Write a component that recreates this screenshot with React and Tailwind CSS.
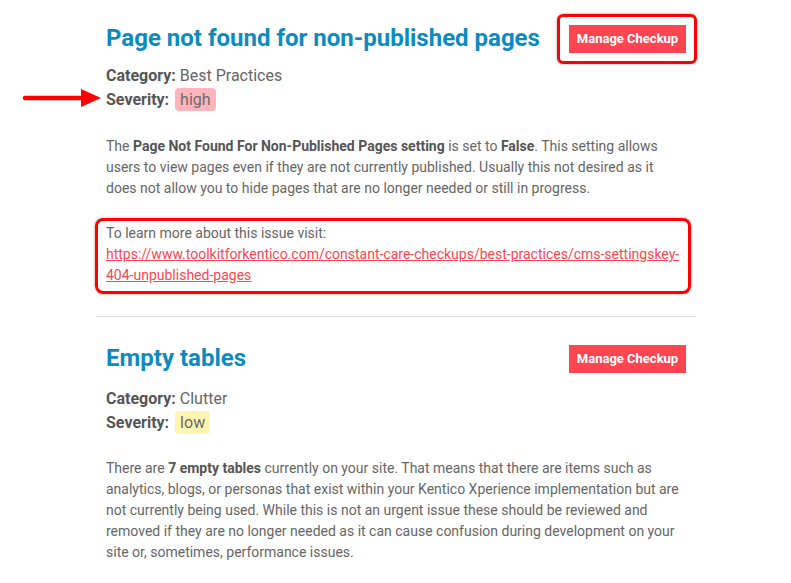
import React from "react";

const FONT = { fontFamily: "Roboto, 'Liberation Sans', sans-serif" };

function Arrow() {
  return (
    <svg className="absolute left-[20px] top-[87px]" width="84" height="22" viewBox="0 0 84 22">
      <line x1="5" y1="11" x2="64" y2="11" stroke="#ff0000" strokeWidth="4.5" strokeLinecap="round" />
      <polygon points="61,2 81,11 61,20" fill="#ff0000" />
    </svg>
  );
}

function Badge({ level }) {
  const cls = level === "high" ? "bg-[#ffb4bb]" : "bg-[#fff5b3]";
  return (
    <span className={`${cls} ml-[6px] inline-block rounded-[4px] px-[5px] leading-[23px] text-[#6b6b6b]`}>
      {level}
    </span>
  );
}

function ManageButton({ outlined }) {
  return (
    <div className="relative">
      {outlined && (
        <div className="absolute -left-[12px] -right-[11px] -top-[11px] -bottom-[11px] rounded-[6px] border-[3px] border-[#ff0000] shadow-[0_0_3px_rgba(0,0,0,0.35)]" />
      )}
      <button className="bg-[#ff4550] text-white text-[13px] font-bold h-[28px] w-[117px] leading-[28px]">
        Manage Checkup
      </button>
    </div>
  );
}

function Meta({ category, level }) {
  return (
    <div className="text-[16px] text-[#666]">
      <div className="leading-[24px]">
        <span className="font-bold text-[#555]">Category:</span> {category}
      </div>
      <div className="leading-[24px] h-[24px]">
        <span className="font-bold text-[#555]">Severity:</span>
        <Badge level={level} />
      </div>
    </div>
  );
}

export default function App() {
  return (
    <div className="relative w-[791px] h-[583px] bg-white overflow-hidden" style={FONT}>
      <Arrow />
      <div className="ml-[96px] w-[600px] px-[10px]">
        <section className="pt-[23px] pb-[30px]">
          <div className="flex items-center justify-between">
            <h2 className="text-[24px] leading-[30px] font-bold text-[#0b8bbf]">
              Page not found for non-published pages
            </h2>
            <div className="mt-[2px]">
              <ManageButton outlined />
            </div>
          </div>
          <div className="mt-[11px]">
            <Meta category="Best Practices" level="high" />
          </div>
          <p className="mt-[24px] text-[14px] leading-[21px] text-[#666]">
            The <b className="text-[#555]">Page Not Found For Non-Published Pages setting</b> is set to{" "}
            <b className="text-[#555]">False</b>. This setting allows users to view pages even if they are not
            currently published. Usually this not desired as it does not allow you to hide pages that are no longer
            needed or still in progress.
          </p>
          <div className="relative mt-[24px] text-[14px] leading-[21px] text-[#666]">
            <div className="absolute -left-[11px] -right-[5px] -top-[5px] -bottom-[8px] rounded-[8px] border-[3px] border-[#ff0000] shadow-[0_0_3px_rgba(0,0,0,0.35)]" />
            <div>To learn more about this issue visit:</div>
            <a className="text-[#ff4550] underline break-all" href="#">
              https://www.toolkitforkentico.com/constant-care-checkups/best-practices/cms-settingskey-404-unpublished-pages
            </a>
          </div>
        </section>
        <div className="-mx-[10px] border-t border-[#dedede]" />
        <section className="pt-[26px]">
          <div className="flex items-center justify-between">
            <h2 className="text-[24px] leading-[30px] font-bold text-[#0b8bbf]">Empty tables</h2>
            <div className="mt-[2px]">
              <ManageButton />
            </div>
          </div>
          <div className="mt-[14px]">
            <Meta category="Clutter" level="low" />
          </div>
          <p className="mt-[23px] text-[14px] leading-[21px] text-[#666]">
            There are <b className="text-[#555]">7 empty tables</b> currently on your site. That means that there are
            items such as analytics, blogs, or personas that exist within your Kentico Xperience implementation but
            are not currently being used. While this is not an urgent issue these should be reviewed and removed if
            they are no longer needed as it can cause confusion during development on your site or, sometimes,
            performance issues.
          </p>
        </section>
      </div>
    </div>
  );
}
